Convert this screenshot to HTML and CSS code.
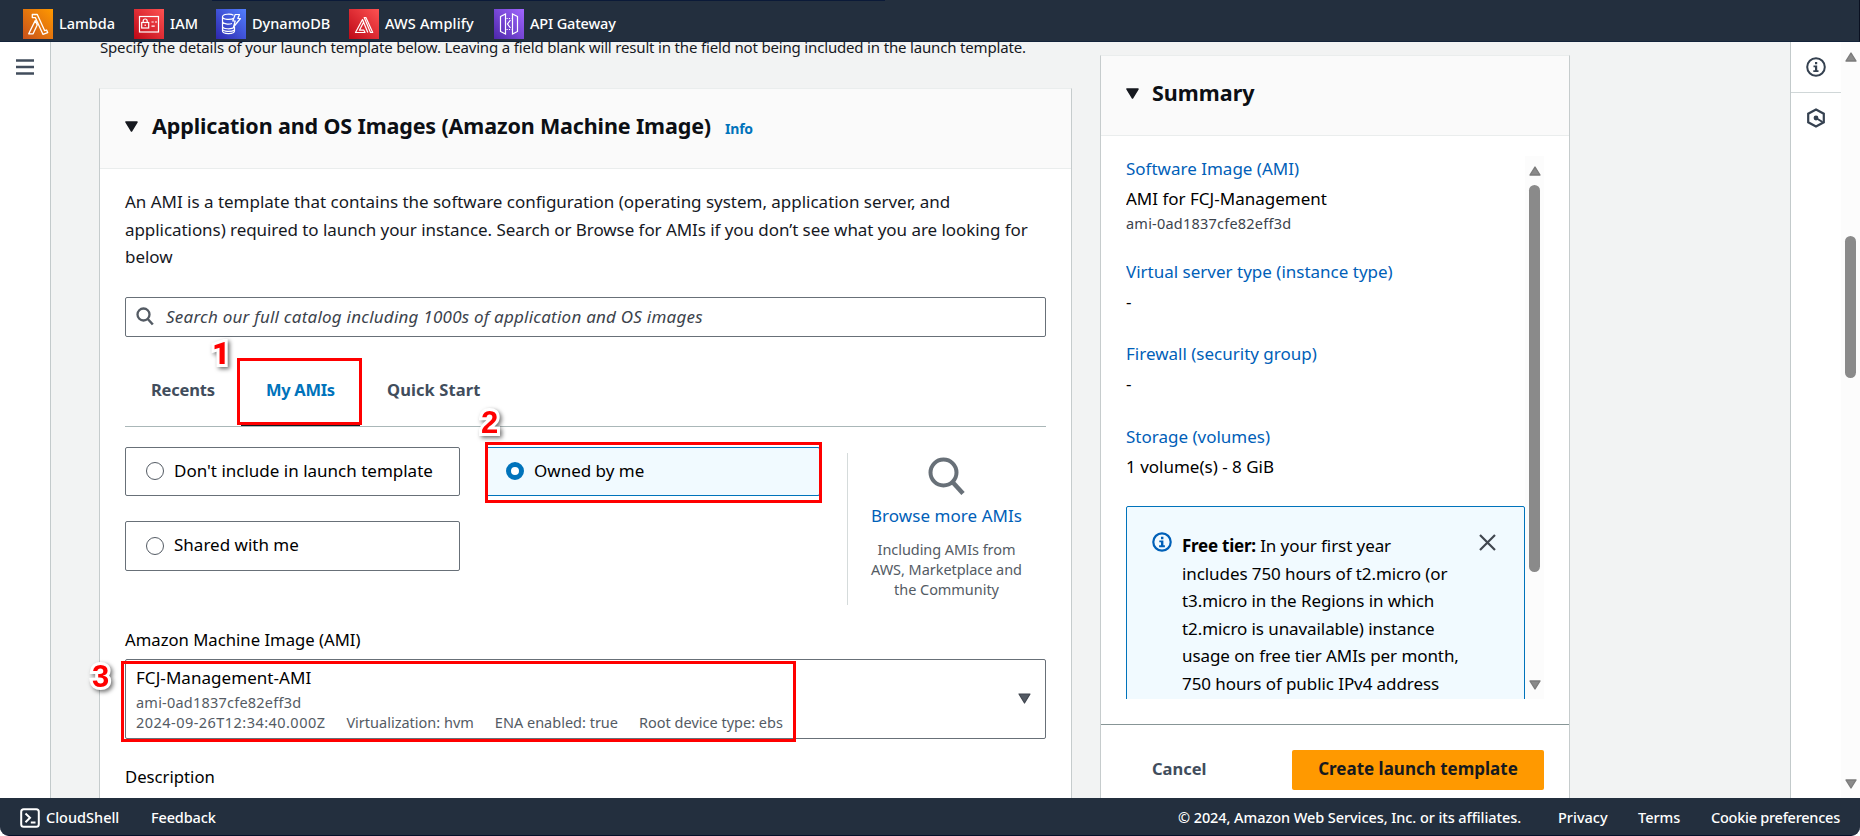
FILE: index.html
```html
<!DOCTYPE html>
<html lang="en">
<head>
<meta charset="utf-8">
<title>Create launch template</title>
<link rel="stylesheet" href="styles.css">
</head>
<body>
<div class="app">
  <header class="topbar">
    <a class="fav fav-lambda">
      <svg width="30" height="30" viewBox="0 0 30 30"><defs><linearGradient id="go" x1="0" y1="1" x2="1" y2="0"><stop offset="0" stop-color="#c8511b"/><stop offset="1" stop-color="#ff9900"/></linearGradient></defs><rect width="30" height="30" fill="url(#go)"/><path d="M9.3 5.5h5l7.4 16.2 1.9-.7 1.1 2.6-4.8 1.7L12.3 8.6H9.3zM12.2 11.6l2 4.3-4.1 8.9H5.7z" fill="none" stroke="#fff" stroke-width="1.3" stroke-linejoin="round"/></svg>
      <span>Lambda</span></a>
    <a class="fav fav-iam">
      <svg width="30" height="30" viewBox="0 0 30 30"><defs><linearGradient id="gr" x1="0" y1="1" x2="1" y2="0"><stop offset="0" stop-color="#bd0816"/><stop offset="1" stop-color="#ff5252"/></linearGradient></defs><rect width="30" height="30" fill="url(#gr)"/><g fill="none" stroke="#fff" stroke-width="1.2"><rect x="5.5" y="7.5" width="19" height="15.5"/><rect x="7.7" y="13.5" width="7" height="5.5"/><path d="M9.2 13.5v-1.5a2 2 0 0 1 4 0v1.5M11.2 15.5v1.6M17.5 13h2.2M21 13h2M17.5 17.2h3.2"/></g></svg>
      <span>IAM</span></a>
    <a class="fav fav-dynamo">
      <svg width="30" height="30" viewBox="0 0 30 30"><defs><linearGradient id="gb" x1="0" y1="1" x2="1" y2="0"><stop offset="0" stop-color="#2e27ad"/><stop offset="1" stop-color="#527fff"/></linearGradient></defs><rect width="30" height="30" fill="url(#gb)"/><g fill="none" stroke="#fff" stroke-width="1.2" stroke-linejoin="round"><path d="M17.5 6.2C15 4.600 6.500 4.700 6.500 7.700c0 3.200 8.500 3.300 11.300 1.500M6.500 7.700v14.400c0 3.300 12 3.300 12 0v-4.300M6.500 12.500c0 2.600 6.500 3 9.500 2M6.500 17.300c0 3 9 3.200 12 1M6.500 20.200c.5 2.600 9 3 12 .8M19.200 5.500h4.300l-1.700 4h2.700l-7 8.500 1.700-6h-2.400z"/></g></svg>
      <span>DynamoDB</span></a>
    <a class="fav fav-amplify">
      <svg width="30" height="30" viewBox="0 0 30 30"><rect width="30" height="30" fill="url(#gr)"/><path d="M13.500 10.500 6.500 23.500h9.500l-1.100-2.300h-4.500L14.600 13.200zM13.500 10.500l1.100 2.700 4.200 10.300M15.200 8.500h1.700l6.800 15h-2.200z" fill="none" stroke="#fff" stroke-width="1.2" stroke-linejoin="round"/></svg>
      <span>AWS Amplify</span></a>
    <a class="fav">
      <svg width="30" height="30" viewBox="0 0 30 30"><defs><linearGradient id="gp" x1="0" y1="1" x2="1" y2="0"><stop offset="0" stop-color="#4d27aa"/><stop offset="1" stop-color="#a166ff"/></linearGradient></defs><rect width="30" height="30" fill="url(#gp)"/><g fill="none" stroke="#fff" stroke-width="1.2"><path d="M6.500 7.500 11.500 5v20l-5-2.500zM23.500 7.500 18.500 5v20l5-2.500z"/><path d="m16.500 11-3 4 3 4"/><path d="M12.500 9.500h5M12.500 20.500h5" stroke-dasharray="1.2 1.2"/></g></svg>
      <span>API Gateway</span></a>
  </header>

  <div class="workspace">
    <nav class="rail-left">
      <svg width="18" height="16" viewBox="0 0 18 16"><path d="M0 1.500h18M0 8h18M0 14.500h18" stroke="#414d5c" stroke-width="2.400"/></svg>
    </nav>

    <main class="content">
      <section class="col-form">
        <p class="lead">Specify the details of your launch template below. Leaving a field blank will result in the field not being included in the launch template.</p>
        <div class="panel">
          <div class="panel-head">
            <svg class="caret" width="13" height="11" viewBox="0 0 13 11"><path d="M1 1h11L6.500 10z" fill="#16191f" stroke="#16191f" stroke-width="1.500" stroke-linejoin="round"/></svg>
            <h2 class="title-ami">Application and OS Images (Amazon Machine Image)</h2>
            <a class="info">Info</a>
          </div>
          <div class="panel-body">
            <p class="intro">An AMI is a template that contains the software configuration (operating system, application server, and<br><span class="tight">applications) required to launch your instance. Search or Browse for AMIs if you don’t see what you are looking for</span><br>below</p>
            <div class="search">
              <svg width="18" height="19" viewBox="0 0 18 19"><circle cx="7.500" cy="7.500" r="6" fill="none" stroke="#545b64" stroke-width="2.300"/><path d="m11.800 12 5 5.500" stroke="#545b64" stroke-width="2.500"/></svg>
              <span>Search our full catalog including 1000s of application and OS images</span>
            </div>
            <div class="tabs">
              <a class="tab tab-recents">Recents</a>
              <a class="tab tab-mine">My AMIs<span class="mark mark-1"><b>1</b></span></a>
              <a class="tab tab-quick">Quick Start</a>
            </div>
            <div class="options">
              <div class="tiles">
                <div class="tile"><i class="radio"></i><span>Don't include in launch template</span></div>
                <div class="tile tile-on"><i class="radio radio-on"></i><span>Owned by me</span><span class="mark mark-2"><b>2</b></span></div>
                <div class="tile"><i class="radio"></i><span>Shared with me</span></div>
              </div>
              <div class="browse">
                <svg width="37" height="38" viewBox="0 0 37 38"><circle cx="15.500" cy="15.500" r="13" fill="none" stroke="#687078" stroke-width="4"/><path d="m24.500 25 10.500 11.500" stroke="#687078" stroke-width="4.500"/></svg>
                <a class="browse-link">Browse more AMIs</a>
                <p class="browse-note">Including AMIs from<br>AWS, Marketplace and<br>the Community</p>
              </div>
            </div>
            <label class="label">Amazon Machine Image (AMI)</label>
            <div class="select">
              <div class="select-text">
                <div class="select-name">FCJ-Management-AMI</div>
                <div class="small ami-id">ami-0ad1837cfe82eff3d</div>
                <div class="small tags"><span class="stamp">2024-09-26T12:34:40.000Z</span><span>Virtualization: hvm</span><span>ENA enabled: true</span><span>Root device type: ebs</span></div>
              </div>
              <svg width="13" height="11" viewBox="0 0 13 11"><path d="M1 1h11L6.500 10z" fill="#545b64" stroke="#414750" stroke-width="1.200" stroke-linejoin="round"/></svg>
              <span class="mark mark-3"><b>3</b></span>
            </div>
            <label class="label label-desc">Description</label>
          </div>
        </div>
      </section>

      <aside class="panel summary">
        <div class="panel-head">
          <svg class="caret" width="13" height="11" viewBox="0 0 13 11"><path d="M1 1h11L6.500 10z" fill="#16191f" stroke="#16191f" stroke-width="1.500" stroke-linejoin="round"/></svg>
          <h2>Summary</h2>
        </div>
        <div class="summary-scroll">
          <div class="summary-list">
            <div class="entry"><a>Software Image (AMI)</a><span>AMI for FCJ-Management</span><small class="small ami-id">ami-0ad1837cfe82eff3d</small></div>
            <div class="entry"><a>Virtual server type (instance type)</a><span>-</span></div>
            <div class="entry"><a>Firewall (security group)</a><span>-</span></div>
            <div class="entry"><a>Storage (volumes)</a><span>1 volume(s) - 8 GiB</span></div>
            <div class="notice">
              <svg class="notice-icon" width="20" height="20" viewBox="0 0 20 20"><circle cx="10" cy="10" r="8.700" fill="none" stroke="#0060b8" stroke-width="2.200"/><path d="M9 4.800h2.400v2.400H9zM7.300 8.400h4.100v4.900h1.500v1.900H7.100v-1.900H9v-3H7.300z" fill="#0060b8"/></svg>
              <p><b>Free tier:</b> In your first year<br>includes 750 hours of t2.micro (or<br>t3.micro in the Regions in which<br>t2.micro is unavailable) instance<br>usage on free tier AMIs per month,<br>750 hours of public IPv4 address</p>
              <svg class="notice-close" width="17" height="17" viewBox="0 0 17 17"><path d="m1 1 15 15M16 1 1 16" stroke="#414750" stroke-width="2.200"/></svg>
            </div>
          </div>
          <div class="bar bar-inner">
            <svg width="12" height="10" viewBox="0 0 12 10"><path d="M6 1 11 9H1z" fill="#8a8a8a" stroke="#7b7b7b" stroke-width="1.400" stroke-linejoin="round"/></svg>
            <i></i>
            <svg class="down" width="12" height="10" viewBox="0 0 12 10"><path d="M6 9 1 1h10z" fill="#8a8a8a" stroke="#7b7b7b" stroke-width="1.400" stroke-linejoin="round"/></svg>
          </div>
        </div>
        <div class="actions">
          <a class="cancel">Cancel</a>
          <a class="primary">Create launch template</a>
        </div>
      </aside>
    </main>

    <aside class="rail-right">
      <div class="tool"><svg width="20" height="20" viewBox="0 0 20 20"><circle cx="10" cy="10" r="8.800" fill="none" stroke="#354150" stroke-width="2"/><path d="M9 5h2.200v2.200H9zM7.500 8.500h3.700v4.700h1.300V15H7.300v-1.800H9v-2.900H7.500z" fill="#354150"/></svg></div>
      <div class="tool"><svg width="20" height="20" viewBox="0 0 20 20"><path d="m10 1.500 7.800 4.200v8.600L10 18.500l-7.800-4.200V5.700z" fill="none" stroke="#354150" stroke-width="2.200"/><circle cx="10" cy="10" r="2.400" fill="#354150"/><path d="m10 10 6.500 4" stroke="#354150" stroke-width="2"/></svg></div>
    </aside>
    <div class="bar bar-page">
      <svg width="12" height="10" viewBox="0 0 12 10"><path d="M6 1 11 9H1z" fill="#8a8a8a" stroke="#7b7b7b" stroke-width="1.400" stroke-linejoin="round"/></svg>
      <i></i>
      <svg class="down" width="12" height="10" viewBox="0 0 12 10"><path d="M6 9 1 1h10z" fill="#8a8a8a" stroke="#7b7b7b" stroke-width="1.400" stroke-linejoin="round"/></svg>
    </div>
  </div>

  <footer class="footer">
    <svg width="20" height="20" viewBox="0 0 20 20"><rect x="1.200" y="1.200" width="17.600" height="17.600" rx="2.500" fill="none" stroke="#fff" stroke-width="2"/><path d="m5.500 5.500 4.500 4.300-4.500 4.400M10.800 14.500h4.700" fill="none" stroke="#fff" stroke-width="2"/></svg>
    <a class="f-shell">CloudShell</a>
    <a class="f-feedback">Feedback</a>
    <span class="f-copy">© 2024, Amazon Web Services, Inc. or its affiliates.</span>
    <a class="f-privacy">Privacy</a>
    <a class="f-terms">Terms</a>
    <a class="f-cookie">Cookie preferences</a>
  </footer>
</div>
</body>
</html>
```
FILE: styles.css
```css
* { box-sizing: border-box; }
body { margin: 0; background: #fff; font-family: "Noto Sans", "Open Sans", sans-serif; font-size: 17px; line-height: 27.5px; color: #16191f; }
p, h2 { margin: 0; }
svg { display: block; flex: none; }
a, span, label, h2 { white-space: nowrap; }

.app { width: 1860px; height: 836px; display: grid; grid-template-rows: 42px 756px 38px; overflow: hidden; }

.topbar { display: flex; background: linear-gradient(#0b1a38, #0b1a38) 212px 0 / 673px 1px no-repeat, #232f3e; border-bottom: 1px solid #13233a; border-right: 1px solid #0a1020; padding: 9px 0 0 23px; }
.fav { display: flex; gap: 6px; height: 30px; color: #fff; font-size: 14.5px; font-weight: 500; line-height: 30px; }
.fav span { margin-top: -1px; }
.fav-lambda { width: 111px; }
.fav-iam { width: 82px; }
.fav-dynamo { width: 133px; }
.fav-amplify { width: 145px; }
.fav-amplify span { letter-spacing: .15px; }
.fav:last-child span { letter-spacing: -.15px; }

.workspace { display: flex; overflow: hidden; background: #f2f3f3; }
.rail-left { width: 51px; background: #fff; border-right: 1px solid #c3cacb; padding: 17px 0 0 16px; }
.content { flex: 1; display: flex; align-items: flex-start; gap: 28px; padding-left: 48px; }
.col-form { width: 973px; }
.lead { margin: -9px 0 0 1px; height: 28px; line-height: 28px; font-size: 15px; letter-spacing: -.17px; white-space: nowrap; }
.panel { background: #fff; border: 1px solid #c6cccd; border-top-color: #eaeded; }
.col-form .panel { margin-top: 27px; height: 800px; }
.panel-head { height: 80px; display: flex; align-items: center; padding: 0 24px 6px 25px; background: #fafafa; border-bottom: 1px solid #eaeded; }
.caret { margin-top: 2px; }
.panel-head h2 { margin-left: 14px; font-size: 21.5px; font-weight: 700; color: #0c0f14; }
.panel-head .title-ami { letter-spacing: -.14px; }
.summary .panel-head h2 { margin-left: 13px; }
.info { margin: 6px 0 0 14px; font-size: 14px; font-weight: 700; letter-spacing: -.2px; color: #0073bb; }
.panel-body { padding: 19px 25px 0 25px; }
.intro { letter-spacing: -.02px; }
.tight { letter-spacing: -.06px; }
.search { margin-top: 26px; height: 40px; display: flex; align-items: center; gap: 12px; padding-left: 10px; border: 1px solid #687078; border-radius: 2px; font-style: italic; letter-spacing: .23px; color: #3c434c; }
.tabs { margin-top: 21px; display: flex; height: 69px; border-bottom: 1px solid #aab7b8; font-size: 16.5px; font-weight: 700; color: #414d5c; line-height: 28px; padding-left: 26px; }
.tab { padding-top: 18px; }
.tab-recents { width: 90px; letter-spacing: -.2px; }
.tab-mine { position: relative; width: 119px; height: 68px; padding-left: 25px; margin-right: 27px; letter-spacing: -.3px; color: #0073bb; border-bottom: 3px solid #16191f; }
.tab-quick { letter-spacing: .1px; }
.options { display: flex; align-items: flex-start; margin-top: 20px; }
.tiles { display: grid; grid-template-columns: 335px 335px; grid-template-rows: 49px 50px; gap: 25px; color: #000; }
.tile { position: relative; display: flex; align-items: center; gap: 10px; padding: 0 0 1px 20px; border: 1px solid #687078; border-radius: 2px; }
.tile-on { background: #f1faff; border-color: #0073bb; }
.radio { width: 18px; height: 18px; border: 1px solid #545b64; border-radius: 50%; margin-top: 1px; }
.radio-on { border: 5.5px solid #0073bb; background: #fff; }
.browse { width: 199px; height: 152px; margin: 6px 0 0 27px; padding: 4px 1px 0 0; border-left: 1px solid #d5dbdb; display: flex; flex-direction: column; align-items: center; text-align: center; }
.browse-link { margin-top: 7px; line-height: 28px; letter-spacing: .05px; color: #0060b8; }
.browse-note { margin-top: 9px; font-size: 14.5px; line-height: 20px; letter-spacing: -.05px; color: #545b64; }
.label { display: block; margin-top: 21px; font-size: 16.7px; line-height: 28px; color: #000; }
.select { position: relative; display: flex; justify-content: space-between; align-items: center; height: 80px; margin-top: 5px; padding: 0 14px 0 10px; border: 1px solid #687078; border-radius: 2px; }
.select-text { align-self: flex-start; padding-top: 5px; }
.select-name { line-height: 25px; margin-bottom: 2px; letter-spacing: .05px; color: #000; }
.small { font-size: 14.5px; line-height: 20px; color: #545b64; }
.ami-id { letter-spacing: .22px; }
.tags { display: flex; gap: 21px; }
.stamp { letter-spacing: .46px; }
.label-desc { margin-top: 24px; }

.mark { position: absolute; border: 3px solid #f00; font-family: "Liberation Sans", Arial, sans-serif; letter-spacing: 0; }
.mark b { position: absolute; font-size: 31px; line-height: 30px; color: #f00; -webkit-text-stroke: 6px #fff; paint-order: stroke fill; filter: drop-shadow(2px 2px 2px rgba(0, 0, 0, .55)); }
.mark-1 { left: -4px; top: 0; width: 125px; height: 67px; }
.mark-1 b { left: -28px; top: -22px; font-family: Roboto, "Liberation Sans", sans-serif; }
.mark-2 { left: -1px; top: -6px; width: 337px; height: 61px; }
.mark-2 b { left: -7px; top: -37px; }
.mark-3 { left: -5px; top: 1px; width: 675px; height: 81px; }
.mark-3 b { left: -32px; top: -2px; }

.summary { width: 470px; height: 760px; margin-top: 13px; }
.summary-scroll { display: flex; height: 588px; padding: 20px 0 25px 25px; }
.summary-list { width: 399px; height: 543px; overflow: hidden; }
.entry { display: flex; flex-direction: column; gap: 2.5px; margin-bottom: 25px; color: #000; }
.entry a { color: #0060b8; }
.entry:first-child { margin-top: -1.5px; }
.entry .small { margin: -2px 0 0; color: #3c434c; }
.notice { display: flex; align-items: flex-start; height: 260px; margin-top: 26px; padding: 25px 0 0 25px; background: #f1faff; border: 1px solid #0073bb; border-radius: 2px; color: #000; }
.notice p { margin-left: 10px; width: 297px; white-space: nowrap; letter-spacing: -.08px; }
.notice b { letter-spacing: -.25px; }
.notice-close { margin-top: 2px; }
.bar { background: #fcfcfc; display: flex; flex-direction: column; align-items: center; }
.bar i { width: 11px; border-radius: 6px; background: #8a8a8a; }
.bar .down { margin-top: auto; }
.bar-inner { width: 19px; padding: 10px 0 9px; }
.bar-inner i { margin-top: 9px; height: 387px; }
.actions { display: flex; justify-content: space-between; align-items: center; border-top: 1px solid #879596; padding: 25px 25px 0 51px; font-weight: 700; }
.cancel { margin-top: -2px; font-size: 16.5px; color: #414d5c; }
.primary { width: 252px; height: 40px; line-height: 38px; text-align: center; background: #ff9900; border-radius: 2px; color: #16191f; }

.rail-right { width: 51px; background: #fff; border-left: 1px solid #c3cacb; }
.tool { height: 51px; display: flex; justify-content: center; align-items: center; border-bottom: 1px solid #d0d7d8; }
.tool:last-child { height: 50px; border-bottom: 0; }
.bar-page { width: 19px; padding: 10px 0 9px; }
.bar-page i { margin-top: 174px; height: 142px; }

.footer { display: flex; align-items: center; background: #232f3e; border-bottom: 1px solid #05102a; border-radius: 0 0 9px 9px; padding: 2px 20px 0; color: #fff; font-size: 14.5px; font-weight: 500; }
.f-shell { margin-left: 6px; width: 105px; }
.f-feedback { letter-spacing: -.15px; }
.f-copy { margin-left: auto; width: 380px; letter-spacing: -.08px; }
.f-privacy { width: 80px; }
.f-terms { width: 73px; }
.f-cookie { width: 129px; letter-spacing: -.25px; }
```
